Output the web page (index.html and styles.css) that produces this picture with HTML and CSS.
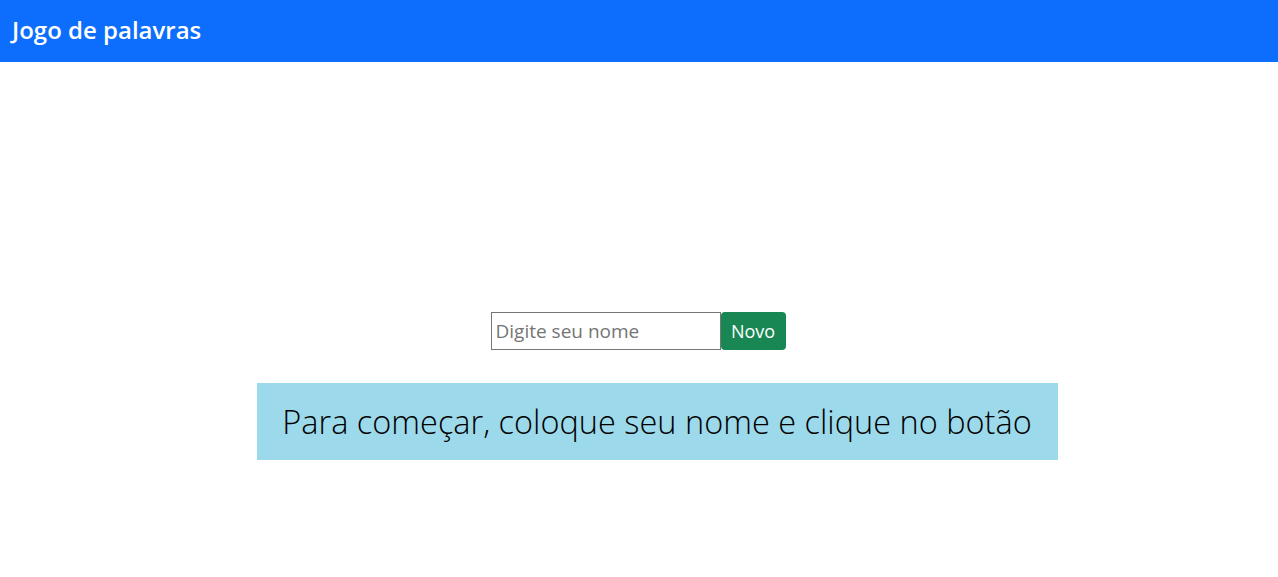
FILE: index.html
```html
<!DOCTYPE html>
<html lang="pt-BR">
<head>
<meta charset="utf-8">
<title>Jogo de palavras</title>
<link rel="stylesheet" href="styles.css">
</head>
<body>
<nav class="navbar">
  <span class="brand">Jogo de palavras</span>
</nav>
<main class="main">
  <div class="form-row">
    <input class="name-input" type="text" placeholder="Digite seu nome">
    <button class="btn-novo" type="button">Novo</button>
  </div>
  <div class="alert">Para começar, coloque seu nome e clique no botão</div>
</main>
</body>
</html>
```
FILE: styles.css
```css
* { box-sizing: border-box; }
body {
  margin: 0;
  font-family: "Open Sans", "Noto Sans", sans-serif;
  background: #fff;
  color: #212529;
}
.navbar {
  height: 62px;
  background: #0d6efd;
  display: flex;
  align-items: center;
  padding: 0 12px;
}
.brand {
  color: #fff;
  font-size: 24px;
  font-weight: 600;
  line-height: 1;
  position: relative;
  top: -1px;
}
.main {
  display: flex;
  flex-direction: column;
  align-items: center;
  padding-top: 250px;
}
.form-row {
  display: flex;
  height: 38px;
  margin-right: 2px;
}
.name-input {
  width: 230px;
  height: 38px;
  border: 1px solid #767676;
  border-radius: 0;
  padding: 0 4px;
  font-family: inherit;
  font-size: 19px;
  color: #212529;
  outline: none;
}
.name-input::placeholder { color: #757575; }
.btn-novo {
  width: 65px;
  height: 38px;
  border: none;
  border-radius: 4px;
  background: #198754;
  color: #fff;
  font-family: inherit;
  font-size: 18px;
  padding: 0;
}
.alert {
  margin-top: 33px;
  width: 801px;
  height: 77px;
  background: #9cd9ea;
  color: #000;
  display: flex;
  align-items: center;
  justify-content: center;
  font-size: 32.5px;
  font-weight: 300;
  margin-left: 36px;
}
```
